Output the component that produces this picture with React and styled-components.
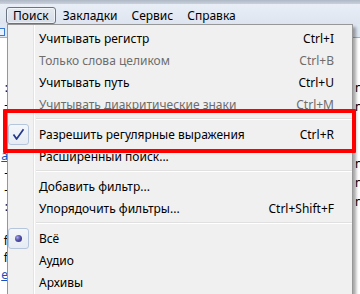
import React from "react"
import styled, { createGlobalStyle } from "styled-components"

const GlobalStyle = createGlobalStyle`
  html, body {
    margin: 0;
    padding: 0;
    background: #fff;
  }
  body {
    font-family: "Noto Sans", "Open Sans", sans-serif;
    font-size: 12px;
    color: #000;
  }
`

const Screen = styled.div`
  position: relative;
  width: 360px;
  height: 294px;
  overflow: hidden;
  background: #fff;
`

const TitleStrip = styled.div`
  height: 4px;
  background: linear-gradient(#aeb8c6, #c9d1dc);
`

const MenuBar = styled.div`
  display: flex;
  align-items: flex-end;
  height: 20px;
  padding-left: 6px;
  background: linear-gradient(#e9eef6, #dde5f0);
`

const BarItem = styled.div`
  box-sizing: border-box;
  height: 17px;
  padding: 0 6px;
  line-height: 15px;
  white-space: nowrap;
  border: 1px solid ${({ $open }) => ($open ? "#6b7482" : "transparent")};
  border-radius: 3px;
  background: ${({ $open }) => ($open ? "linear-gradient(#e4e9f1, #d6dee9)" : "transparent")};
  box-shadow: ${({ $open }) => ($open ? "inset 0 0 0 1px rgba(255,255,255,0.55)" : "none")};
`

/* the window behind the open menu */
const Backdrop = styled.div`
  display: flex;
  flex-direction: column;
`

const ToolStrip = styled.div`
  height: 9px;
  padding-top: 4px;
  background: #dfe7f3;
  border-bottom: 1px solid #a7b0bd;
`

const TabMark = styled.div`
  width: 4px;
  height: 6px;
  border: 1px solid #3b78d0;
  border-left: none;
  background: #eaf2fd;
`

const Content = styled.div`
  display: flex;
  justify-content: space-between;
  padding-top: 41px;
`

const SideColumn = styled.div`
  display: flex;
  flex-direction: column;
  width: 8px;
  overflow: hidden;
  font-size: 12px;
  line-height: 17px;
  text-align: ${({ $side }) => ($side === "right" ? "left" : "right")};
  padding-left: ${({ $side }) => ($side === "right" ? "3px" : "0")};
  box-sizing: border-box;
`

const Fragment = styled.span`
  height: ${({ $h }) => $h || 17}px;
  color: ${({ $link }) => ($link ? "#1a4fb8" : "#000")};
  text-decoration: ${({ $link }) => ($link ? "underline" : "none")};
  white-space: nowrap;
`

const Dropdown = styled.div`
  position: absolute;
  left: 7px;
  top: 24px;
  width: 346px;
  height: 290px;
  box-sizing: border-box;
  padding: 2px 0;
  border: 1px solid #979797;
  background: linear-gradient(
    to right,
    #f1f1f1 25px,
    #e2e3e3 25px,
    #e2e3e3 26px,
    #ffffff 26px,
    #ffffff 27px,
    #f0f0f0 27px
  );
  box-shadow: 3px 3px 3px rgba(0, 0, 0, 0.35);
`

const Row = styled.div`
  display: grid;
  grid-template-columns: 31px 1fr auto;
  align-items: center;
  height: 22px;
  padding-right: 18px;
  color: ${({ $disabled }) => ($disabled ? "#6d6d6d" : "#000")};
  white-space: nowrap;
`

const Mark = styled.div`
  box-sizing: border-box;
  width: 21px;
  height: 21px;
  margin-top: 1px;
  display: flex;
  align-items: center;
  justify-content: center;
  border: 1px solid #b5c6dc;
  border-radius: 3px;
  background: linear-gradient(#f3f6fa, #e6ecf4);
`

const Dot = styled.div`
  width: 7px;
  height: 7px;
  border-radius: 50%;
  background: radial-gradient(circle at 35% 35%, #a9a9e6 0%, #5252a8 45%, #27276a 100%);
`

const Shortcut = styled.span`
  text-align: right;
`

const Separator = styled.div`
  height: 8px;
  margin-left: 28px;
  display: flex;
  flex-direction: column;
  justify-content: center;
  &::before {
    content: "";
    height: 1px;
    background: #e0e0e0;
  }
  &::after {
    content: "";
    height: 1px;
    background: #fff;
  }
`

const Highlight = styled.div`
  position: absolute;
  left: 3px;
  top: 109px;
  width: 353px;
  height: 44px;
  box-sizing: border-box;
  border: 4px solid #fe0000;
  border-radius: 1px;
`

const CheckIcon = () => (
  <svg width="13" height="13" viewBox="0 0 13 13">
    <path d="M1.5 6.5 L4.6 11 L11.5 1.2" fill="none" stroke="#24378c" strokeWidth="1.7" strokeLinejoin="round" />
  </svg>
)

const items = [
  { label: "Учитывать регистр", key: "Ctrl+I" },
  { label: "Только слова целиком", key: "Ctrl+B", disabled: true },
  { label: "Учитывать путь", key: "Ctrl+U" },
  { label: "Учитывать диакритические знаки", key: "Ctrl+M", disabled: true },
  { sep: true },
  { label: "Разрешить регулярные выражения", key: "Ctrl+R", mark: "check" },
  { label: "Расширенный поиск..." },
  { sep: true },
  { label: "Добавить фильтр..." },
  { label: "Упорядочить фильтры...", key: "Ctrl+Shift+F" },
  { sep: true },
  { label: "Всё", mark: "radio" },
  { label: "Аудио" },
  { label: "Архивы" },
]

const leftBits = [":", "-", "", "", "a", "-", "-", ":", "", "f", "f", "e"]
const rightBits = ["n", "n", "", "", "n", "n", "n"]

const App = () => (
  <Screen>
    <GlobalStyle />
    <TitleStrip />
    <MenuBar>
      <BarItem $open>Поиск</BarItem>
      <BarItem>Закладки</BarItem>
      <BarItem>Сервис</BarItem>
      <BarItem>Справка</BarItem>
    </MenuBar>

    <Backdrop>
      <ToolStrip>
        <TabMark />
      </ToolStrip>
      <Content>
        <SideColumn $side="left">
          {leftBits.map((b, i) => (
            <Fragment key={i} $link={b === "a" || b === "e"}>
              {b || "\u00a0"}
            </Fragment>
          ))}
        </SideColumn>
        <SideColumn $side="right">
          {rightBits.map((b, i) => (
            <Fragment key={i} $h={19}>
              {b || "\u00a0"}
            </Fragment>
          ))}
        </SideColumn>
      </Content>
    </Backdrop>

    <Dropdown>
      {items.map((item, i) =>
        item.sep ? (
          <Separator key={i} />
        ) : (
          <Row key={i} $disabled={item.disabled}>
            <span>
              {item.mark === "check" && (
                <Mark>
                  <CheckIcon />
                </Mark>
              )}
              {item.mark === "radio" && (
                <Mark>
                  <Dot />
                </Mark>
              )}
            </span>
            <span>{item.label}</span>
            <Shortcut>{item.key}</Shortcut>
          </Row>
        )
      )}
    </Dropdown>

    <Highlight />
  </Screen>
)

export default App
